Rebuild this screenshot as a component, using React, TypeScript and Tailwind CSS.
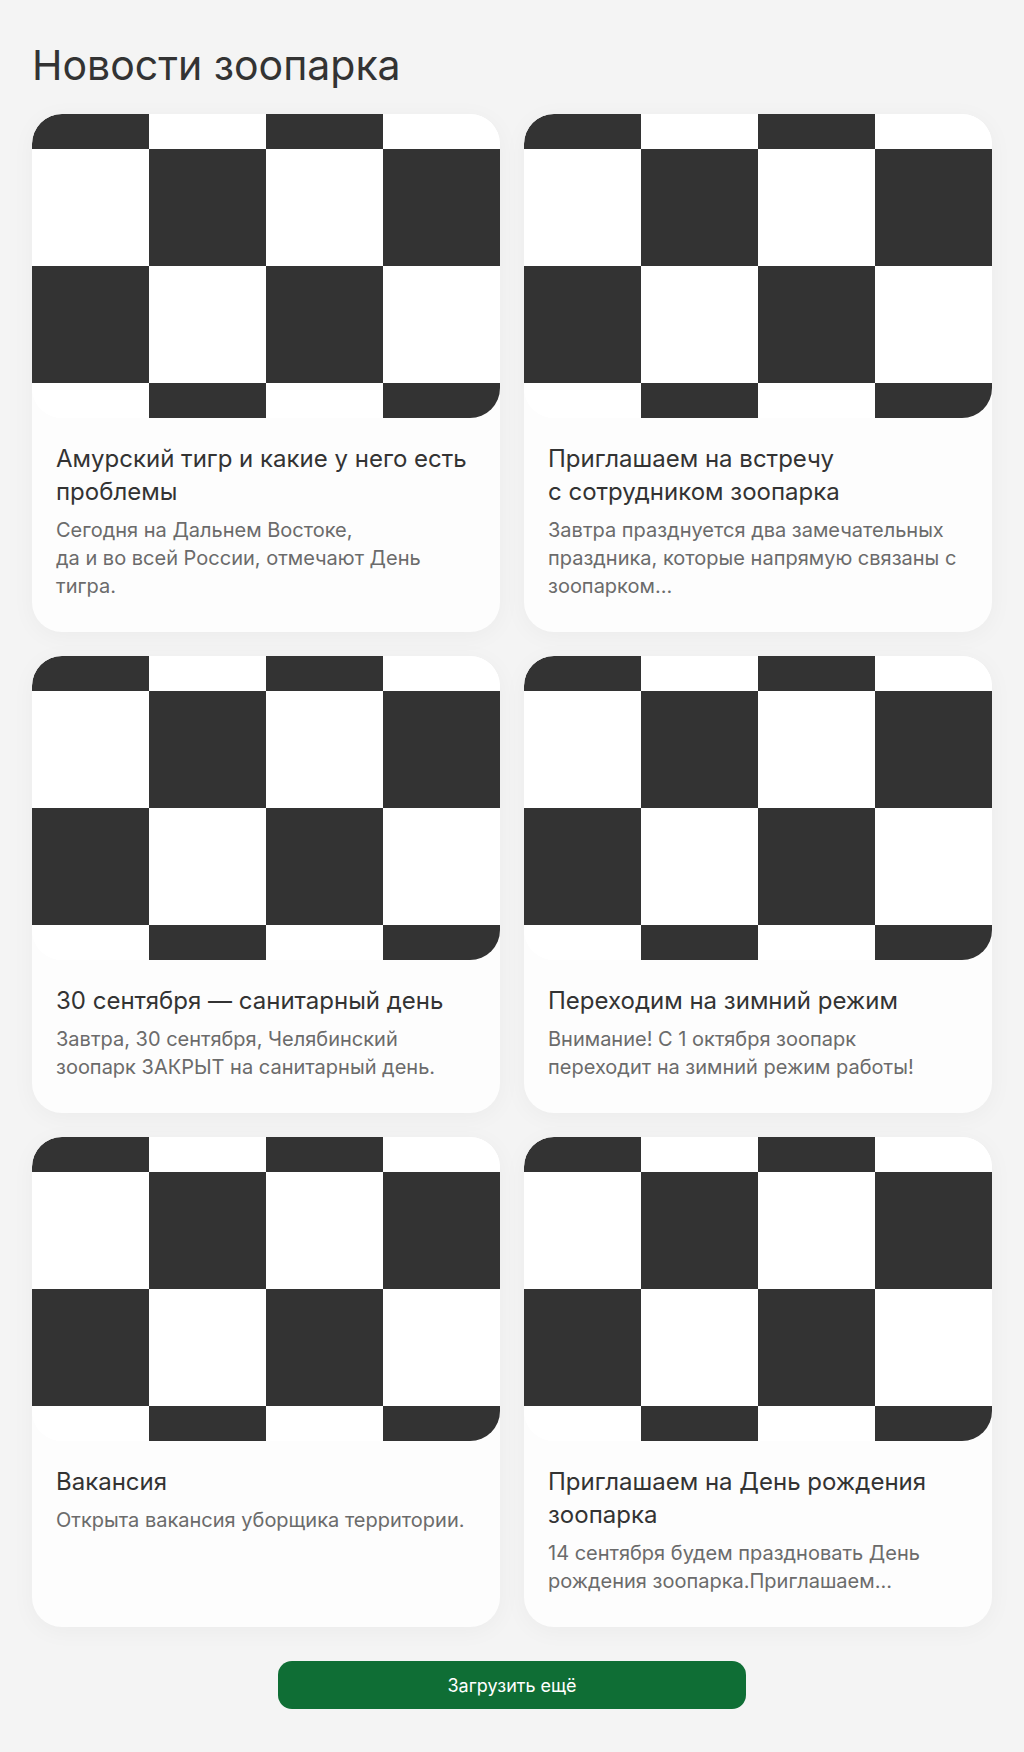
import React from "react";

type News = { title: React.ReactNode; text: React.ReactNode };

const news: News[] = [
  {
    title: "Амурский тигр и какие у него есть проблемы",
    text: (
      <>
        Сегодня на Дальнем Востоке,
        <br />
        да и во всей России, отмечают День тигра.
      </>
    ),
  },
  {
    title: (
      <>
        Приглашаем на встречу
        <br />с сотрудником зоопарка
      </>
    ),
    text: "Завтра празднуется два замечательных праздника, которые напрямую связаны с зоопарком...",
  },
  {
    title: "30 сентября — санитарный день",
    text: "Завтра, 30 сентября, Челябинский зоопарк ЗАКРЫТ на санитарный день.",
  },
  {
    title: "Переходим на зимний режим",
    text: (
      <>
        Внимание! С 1 октября зоопарк
        <br />
        переходит на зимний режим работы!
      </>
    ),
  },
  {
    title: "Вакансия",
    text: "Открыта вакансия уборщика территории.",
  },
  {
    title: "Приглашаем на День рождения зоопарка",
    text: "14 сентября будем праздновать День рождения зоопарка.Приглашаем...",
  },
];

function Checker() {
  const cells = [];
  for (let r = 0; r < 4; r++) {
    for (let c = 0; c < 4; c++) {
      if ((r + c) % 2 === 0) {
        cells.push(<rect key={`${r}-${c}`} x={c} y={r} width={1} height={1} fill="#333333" />);
      }
    }
  }
  return (
    <div className="h-[304px] w-full overflow-hidden rounded-[30px] bg-white">
      <svg
        className="block h-full w-full"
        viewBox="0 0 4 4"
        preserveAspectRatio="xMidYMid slice"
        shapeRendering="crispEdges"
      >
        <rect x={0} y={0} width={4} height={4} fill="#ffffff" />
        {cells}
      </svg>
    </div>
  );
}

export default function App() {
  return (
    <div
      className="min-h-[1752px] bg-[#f4f4f4] px-8 pt-10 pb-[41px] text-[#333333]"
      style={{ fontFamily: "Inter, 'Noto Sans', sans-serif" }}
    >
      <h1 className="mb-6 text-[41px] leading-[50px] font-normal text-[#333333]">Новости зоопарка</h1>
      <div className="grid grid-cols-2 gap-6">
        {news.map((n, i) => (
          <article
            key={i}
            className="flex flex-col overflow-hidden rounded-[30px] bg-[#fdfdfd] shadow-[0_4px_24px_rgba(0,0,0,0.04)]"
          >
            <Checker />
            <div className="px-6 pt-6 pb-8">
              <h2 className="text-[24px] leading-[33px] font-normal text-[#333333]">{n.title}</h2>
              <p className="mt-2 text-[20px] leading-[28px] text-[#6b6b6b]">{n.text}</p>
            </div>
          </article>
        ))}
      </div>
      <div className="mt-[34px] flex justify-center">
        <button className="h-12 w-[468px] rounded-[14px] bg-[#0f6e35] text-[18px] text-white">
          Загрузить ещё
        </button>
      </div>
    </div>
  );
}
